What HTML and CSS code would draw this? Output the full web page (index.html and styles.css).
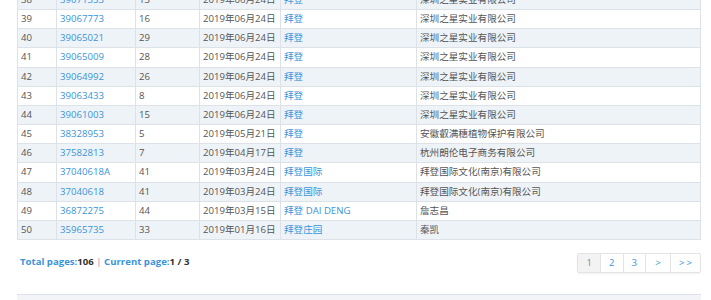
FILE: index.html
```html
<!DOCTYPE html>
<html lang="zh-CN">
<head>
<meta charset="utf-8">
<title>商标列表</title>
<link rel="stylesheet" href="styles.css">
</head>
<body>
<div class="page">
  <table class="list">
    <colgroup>
      <col class="c1"><col class="c2"><col class="c3"><col class="c4"><col class="c5"><col class="c6">
    </colgroup>
    <tbody>
      <tr class="alt"><td>38</td><td><a href="#">39071333</a></td><td>13</td><td>2019年06月24日</td><td><a href="#">拜登</a></td><td>深圳之星实业有限公司</td></tr>
      <tr><td>39</td><td><a href="#">39067773</a></td><td>16</td><td>2019年06月24日</td><td><a href="#">拜登</a></td><td>深圳之星实业有限公司</td></tr>
      <tr class="alt"><td>40</td><td><a href="#">39065021</a></td><td>29</td><td>2019年06月24日</td><td><a href="#">拜登</a></td><td>深圳之星实业有限公司</td></tr>
      <tr><td>41</td><td><a href="#">39065009</a></td><td>28</td><td>2019年06月24日</td><td><a href="#">拜登</a></td><td>深圳之星实业有限公司</td></tr>
      <tr class="alt"><td>42</td><td><a href="#">39064992</a></td><td>26</td><td>2019年06月24日</td><td><a href="#">拜登</a></td><td>深圳之星实业有限公司</td></tr>
      <tr><td>43</td><td><a href="#">39063433</a></td><td>8</td><td>2019年06月24日</td><td><a href="#">拜登</a></td><td>深圳之星实业有限公司</td></tr>
      <tr class="alt"><td>44</td><td><a href="#">39061003</a></td><td>15</td><td>2019年06月24日</td><td><a href="#">拜登</a></td><td>深圳之星实业有限公司</td></tr>
      <tr><td>45</td><td><a href="#">38328953</a></td><td>5</td><td>2019年05月21日</td><td><a href="#">拜登</a></td><td>安徽叡满穗植物保护有限公司</td></tr>
      <tr class="alt"><td>46</td><td><a href="#">37582813</a></td><td>7</td><td>2019年04月17日</td><td><a href="#">拜登</a></td><td>杭州朗伦电子商务有限公司</td></tr>
      <tr><td>47</td><td><a href="#">37040618A</a></td><td>41</td><td>2019年03月24日</td><td><a href="#">拜登国际</a></td><td>拜登国际文化(南京)有限公司</td></tr>
      <tr class="alt"><td>48</td><td><a href="#">37040618</a></td><td>41</td><td>2019年03月24日</td><td><a href="#">拜登国际</a></td><td>拜登国际文化(南京)有限公司</td></tr>
      <tr><td>49</td><td><a href="#">36872275</a></td><td>44</td><td>2019年03月15日</td><td><a href="#">拜登 DAI DENG</a></td><td>詹志昌</td></tr>
      <tr class="alt"><td>50</td><td><a href="#">35965735</a></td><td>33</td><td>2019年01月16日</td><td><a href="#">拜登庄园</a></td><td>秦凯</td></tr>
    </tbody>
  </table>

  <div class="pager">
    <div class="summary">
      <span class="label">Total pages:</span><span class="val">106</span>
      <span class="sep">|</span>
      <span class="label">Current page:</span><span class="val">1 / 3</span>
    </div>
    <ul class="pages">
      <li class="num active">1</li>
      <li class="num"><a href="#">2</a></li>
      <li class="num"><a href="#">3</a></li>
      <li class="next"><a href="#">&gt;</a></li>
      <li class="last"><a href="#">&gt;&gt;</a></li>
    </ul>
  </div>

  <div class="footer"></div>
</div>
</body>
</html>
```

FILE: styles.css
```css
html, body {
  margin: 0;
  padding: 0;
  background: #ffffff;
}

body {
  font-family: "Open Sans", "Noto Sans CJK SC", sans-serif;
  font-size: 9.6px;
  color: #555555;
  overflow: hidden;
}

a {
  color: #3a94da;
  text-decoration: none;
}

.page {
  width: 684px;
  margin-left: 17px;
}

.list {
  width: 684px;
  table-layout: fixed;
  border-collapse: separate;
  border-spacing: 0;
  border-left: 1px solid #dde2e8;
  border-top: 1px solid #dde2e8;
  margin-top: -10.17px;
}

.c1 { width: 39px; }
.c2 { width: 79px; }
.c3 { width: 64px; }
.c4 { width: 81px; }
.c5 { width: 136px; }
.c6 { width: 284px; }

.list td {
  height: 18.17px;
  line-height: 18.17px;
  padding: 0 3px;
  border-right: 1px solid #dde2e8;
  border-bottom: 1px solid #dde2e8;
  white-space: nowrap;
  overflow: hidden;
  vertical-align: middle;
}

.list tr.alt td {
  background: #eef3f8;
}

.pager {
  display: flex;
  justify-content: space-between;
  align-items: flex-start;
  margin-top: 13.3px;
}

.summary {
  font-weight: bold;
  padding-left: 3px;
  line-height: 17px;
  color: #333333;
}

.summary .label {
  color: #3a94da;
}

.summary .sep {
  color: #a488a8;
  font-weight: normal;
}

.pages {
  display: flex;
  list-style: none;
  margin: 0;
  padding: 0;
  border: 1px solid #e3e3e3;
  border-radius: 2px;
  box-shadow: 0 1px 2px rgba(0, 0, 0, 0.06);
  height: 18px;
}

.pages li {
  box-sizing: border-box;
  line-height: 18px;
  text-align: center;
  border-left: 1px solid #e3e3e3;
  color: #888888;
  font-size: 9.6px;
}

.pages li:first-child {
  border-left: none;
}

.pages li.num {
  width: 22.5px;
}

.pages li.num:first-child {
  width: 21.7px;
}

.pages li.active {
  background: #f3f3f3;
}

.pages li.next {
  width: 25px;
}

.pages li.last {
  width: 30px;
  letter-spacing: 2px;
  padding-left: 2px;
}

.footer {
  margin-top: 21px;
  height: 20px;
  border-top: 1px solid #dde2ea;
  background: #f3f4f8;
}
```
